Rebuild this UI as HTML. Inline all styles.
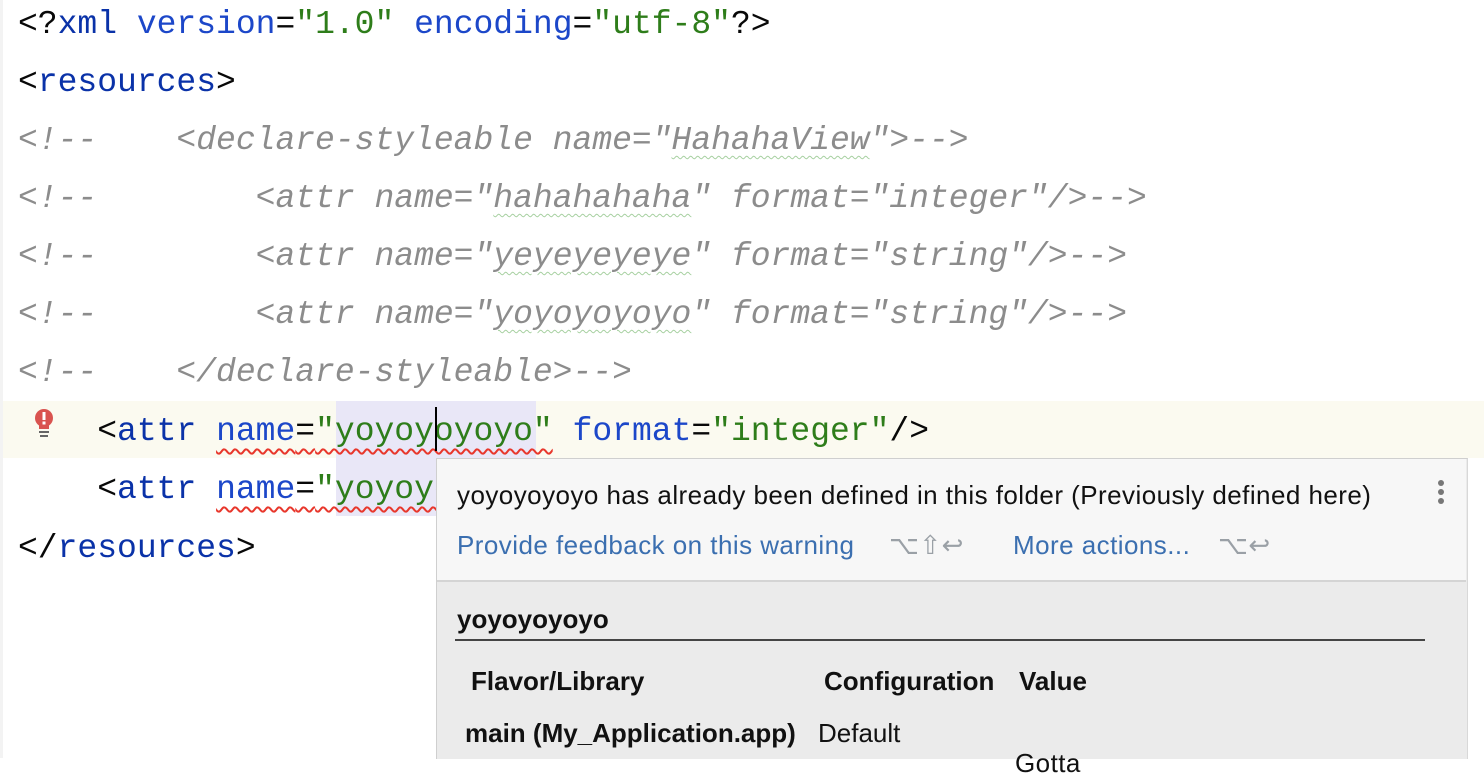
<!DOCTYPE html>
<html><head><style>
body{margin:0;width:1484px;height:758px;overflow:hidden;background:#fff;position:relative;font-family:"Liberation Mono",monospace;}
.l{position:absolute;left:18px;font-size:33px;line-height:58px;height:58px;white-space:pre;color:#080808;}
.t{color:#0a32a8}.a{color:#1c47c9}.v{color:#2e7d1a}.c{color:#8c8c8c;font-style:italic}
.w{text-decoration:underline wavy #a6d0a0;text-decoration-thickness:1px;text-underline-offset:6px}
.r{text-decoration:underline wavy #e8372c;text-decoration-thickness:2px;text-underline-offset:8px}
.p{position:absolute;font-family:"Liberation Sans",sans-serif;white-space:nowrap;font-size:26px;letter-spacing:0.45px;line-height:30px}
</style></head><body>
<div style="position:absolute;left:0;top:401px;width:1484px;height:57px;background:#fbfaf0"></div>
<div style="position:absolute;left:336px;top:401px;width:200px;height:115px;background:#e9e7f7"></div>
<div style="position:absolute;left:0;top:0;width:3px;height:758px;background:#f3f3f3"></div>
<div class="l" style="top:-4px"><span>&lt;?</span><span class="t">xml </span><span class="a">version</span>=<span class="v">"1.0" </span><span class="a">encoding</span>=<span class="v">"utf-8"</span>?&gt;</div>
<div class="l" style="top:54px">&lt;<span class="t">resources</span>&gt;</div>
<div class="l c" style="top:112px">&lt;!--    &lt;declare-styleable name="<span class="w">HahahaView</span>"&gt;--&gt;</div>
<div class="l c" style="top:170px">&lt;!--        &lt;attr name="<span class="w">hahahahaha</span>" format="integer"/&gt;--&gt;</div>
<div class="l c" style="top:228px">&lt;!--        &lt;attr name="<span class="w">yeyeyeyeye</span>" format="string"/&gt;--&gt;</div>
<div class="l c" style="top:286px">&lt;!--        &lt;attr name="<span class="w">yoyoyoyoyo</span>" format="string"/&gt;--&gt;</div>
<div class="l c" style="top:344px">&lt;!--    &lt;/declare-styleable&gt;--&gt;</div>
<div class="l" style="top:403px">    &lt;<span class="t">attr </span><span class="r"><span class="a">name</span>=<span class="v">"yoyoyoyoyo"</span></span> <span class="a">format</span>=<span class="v">"integer"</span>/&gt;</div>
<div class="l" style="top:461px">    &lt;<span class="t">attr </span><span class="r"><span class="a">name</span>=<span class="v">"yoyoyoyoyo"</span></span></div>
<div class="l" style="top:520px">&lt;/<span class="t">resources</span>&gt;</div>
<div style="position:absolute;left:435px;top:407px;width:2px;height:44px;background:#000"></div>
<svg style="position:absolute;left:33px;top:408px" width="22" height="30"><circle cx="11" cy="10" r="9" fill="#d9534f"/><rect x="6" y="17" width="10" height="4" fill="#d9534f"/><rect x="9.5" y="4" width="3" height="8" fill="#fff"/><rect x="9.5" y="13.5" width="3" height="3" fill="#fff"/><rect x="6" y="23" width="10" height="2" fill="#666"/><rect x="7" y="27" width="8" height="2" fill="#666"/></svg>
<div style="position:absolute;left:436px;top:458px;width:1030px;height:300px;background:#ebebeb;border-left:1px solid #cfcfcf;border-top:1px solid #cfcfcf;border-right:1px solid #d8d8d8"></div>
<div style="position:absolute;left:437px;top:459px;width:1029px;height:121px;background:#f7f7f7;border-bottom:2px solid #d4d4d4"></div>
<div class="p" style="left:457px;top:480px;color:#111">yoyoyoyoyo has already been defined in this folder (Previously defined here)</div>
<div style="position:absolute;left:1438px;top:480px;width:6px;height:6px;border-radius:3px;background:#777;box-shadow:0 9px 0 #777,0 18px 0 #777"></div>
<div class="p" style="left:457px;top:530px;color:#3b6fb0">Provide feedback on this warning</div>
<div class="p" style="left:889px;top:530px;color:#9aa0a6">⌥⇧↩</div>
<div class="p" style="left:1013px;top:530px;color:#3b6fb0">More actions...</div>
<div class="p" style="left:1218px;top:530px;color:#9aa0a6">⌥↩</div>
<div class="p" style="left:457px;top:604px;font-weight:bold;color:#111;letter-spacing:0">yoyoyoyoyo</div>
<div style="position:absolute;left:455px;top:639px;width:970px;height:2px;background:#444"></div>
<div class="p" style="left:471px;top:666px;font-weight:bold;color:#111;letter-spacing:0">Flavor/Library</div>
<div class="p" style="left:824px;top:666px;font-weight:bold;color:#111;letter-spacing:0">Configuration</div>
<div class="p" style="left:1019px;top:666px;font-weight:bold;color:#111;letter-spacing:0">Value</div>
<div class="p" style="left:465px;top:718px;font-weight:bold;color:#111;letter-spacing:0">main (My_Application.app)</div>
<div class="p" style="left:818px;top:718px;color:#111;letter-spacing:0">Default</div>
<div class="p" style="left:1015px;top:748px;color:#111">Gotta</div>
</body></html>
